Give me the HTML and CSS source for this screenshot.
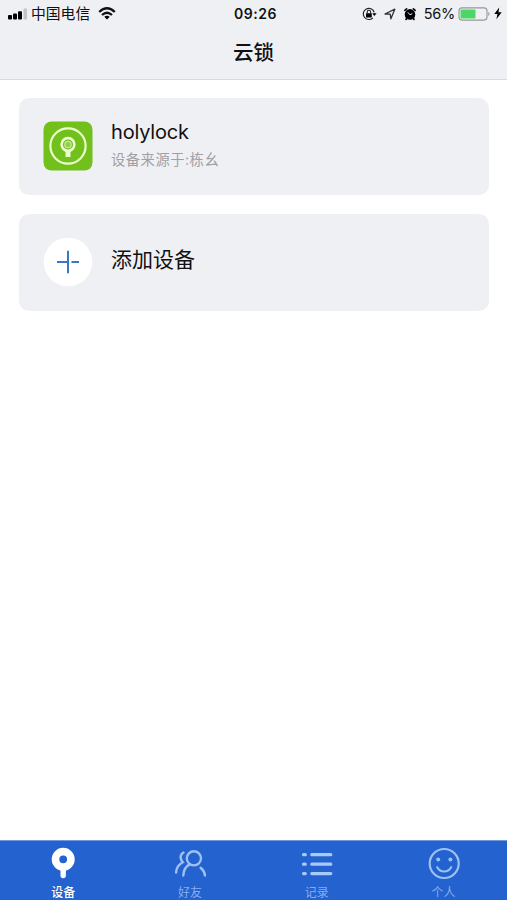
FILE: index.html
```html
<!DOCTYPE html>
<html lang="zh">
<head>
    <meta charset="UTF-8">
    <meta name="viewport" content="width=device-width, initial-scale=1.0">
    <title>云锁</title>
    <link rel="stylesheet" href="styles.css">
</head>
<body>
    <div class="app">
        <header class="header">
            <div class="status-bar">
                <div class="status-left">
                    <svg class="signal" width="20" height="12" viewBox="0 0 20 12">
                        <rect x="0" y="7" width="4" height="4.5" rx="1"/>
                        <rect x="5" y="5.5" width="4" height="6" rx="1"/>
                        <rect x="10" y="3.3" width="4" height="8.2" rx="1"/>
                        <rect x="15.5" y="0.5" width="3.5" height="11" rx="1" fill="#c3c4c9"/>
                    </svg>
                    <span class="carrier">中国电信</span>
                    <svg class="wifi" width="18" height="13" viewBox="0 0 18 13">
                        <path d="M1.2 5Q9-2.4 16.8 5M4 8Q9 3.6 14 8" fill="none" stroke="#111" stroke-width="2.3"/>
                        <path d="M6.3 9.8Q9 7.8 11.7 9.8L9 12.5Z"/>
                    </svg>
                </div>
                <span class="time">09:26</span>
                <div class="status-right">
                    <svg width="15" height="14" viewBox="0 0 15 14">
                        <path d="M12.2 5.2A5.6 5.6 0 1 0 10.9 10.8" fill="none" stroke="#222" stroke-width="1.2"/>
                        <path d="M10.2 6.2h4.4l-2.2 2.9z"/>
                        <rect x="4" y="6.2" width="5.8" height="4.2" rx=".5"/>
                        <path d="M5.2 6.5V5a1.7 1.7 0 0 1 3.4 0v1.5" fill="none" stroke="#222" stroke-width="1.1"/>
                    </svg>
                    <svg class="location" width="12" height="12" viewBox="0 0 12 12">
                        <path d="M1 6L10.8 1.2L6.9 10.8L6.2 6.2Z" fill="none" stroke="#333" stroke-width="1.3" stroke-linejoin="round"/>
                    </svg>
                    <svg class="alarm" width="14" height="14" viewBox="0 0 14 14">
                        <circle cx="7" cy="7.4" r="5.3"/>
                        <path d="M1.9 3.4L3.6 1.9M12.1 3.4L10.4 1.9M3.9 11.2L3 12.4M10.1 11.2l.9 1.2" stroke="#111" stroke-width="1.8" stroke-linecap="round"/>
                        <path d="M4.8 5.3L7 7.8L9.3 6.5" fill="none" stroke="#eff0f4" stroke-width="1"/>
                    </svg>
                    <span class="percent">56%</span>
                    <svg class="battery" width="33" height="14" viewBox="0 0 33 14">
                        <rect x="1" y=".9" width="28" height="12.2" rx="3" fill="none" stroke="#96979b" stroke-width="1.1"/>
                        <rect x="2.5" y="2.4" width="15" height="9.2" rx="1" fill="#4cd765"/>
                        <path d="M30.3 4.8q2.5 2.2 0 4.4z" fill="#96979b"/>
                    </svg>
                    <svg class="bolt" width="8" height="13" viewBox="0 0 8 13">
                        <path d="M5.2.4L.3 7h3.1L2.4 12.2L7.7 5.3H4.5Z"/>
                    </svg>
                </div>
            </div>
            <h1>云锁</h1>
        </header>

        <main class="device-list">
            <div class="card">
                <svg class="card-icon" width="50" height="50" viewBox="0 0 50 50">
                    <rect x=".5" y=".5" width="49" height="49" rx="8" fill="#71c01c"/>
                    <circle cx="25" cy="25" r="17.6" fill="none" stroke="#eaffcd" stroke-width="2.2"/>
                    <path d="M25 28v8" stroke="#eaffcd" stroke-width="5"/>
                    <circle cx="25" cy="23.5" r="6.4" fill="#71c01c" stroke="#eaffcd" stroke-width="2.6"/>
                    <circle cx="25" cy="23.5" r="3.2" fill="#92cd4e" stroke="#c5ea98" stroke-width="1.3"/>
                </svg>
                <div class="card-text">
                    <h2>holylock</h2>
                    <p>设备来源于:栋幺</p>
                </div>
            </div>
            <div class="card">
                <svg class="card-icon" width="50" height="50" viewBox="0 0 50 50">
                    <circle cx="25" cy="25" r="24.3" fill="#fff"/>
                    <path d="M25 13.8v22.4M14 25h11M28.5 25h7.5" stroke="#3878c4" stroke-width="2"/>
                </svg>
                <div class="card-text">
                    <h2 class="add-title">添加设备</h2>
                </div>
            </div>
        </main>

        <nav class="tab-bar">
            <a class="tab active">
                <svg width="34" height="34" viewBox="0 0 34 34">
                    <path d="M17.2 23v6.5" stroke="#fff" stroke-width="5.4" stroke-linecap="round"/>
                    <circle cx="17.2" cy="13.3" r="7.7" fill="none" stroke="#fff" stroke-width="7.6"/>
                </svg>
                <span>设备</span>
            </a>
            <a class="tab">
                <svg width="34" height="34" viewBox="0 0 34 34" fill="none" stroke="#9dc0f5" stroke-width="2.4" stroke-linecap="round">
                    <circle cx="20.9" cy="12.3" r="7.1"/>
                    <path d="M16.6 18.4Q10.6 21.5 10.3 29.5M27.6 21.8Q31.4 24.8 32 29.5M10.5 6.6Q6.8 9 7.8 12.6Q8.3 14.5 9.8 16.2Q3.4 19.5 3.1 26.6"/>
                </svg>
                <span>好友</span>
            </a>
            <a class="tab">
                <svg width="34" height="34" viewBox="0 0 34 34" fill="none" stroke="#a9caf8" stroke-width="3.2" stroke-linecap="round">
                    <path d="M3.5 8.7h1.8M11.8 8.7h19M3.5 18.2h1.8M11.8 18.2h19M3.5 27.6h1.8M11.8 27.6h19"/>
                </svg>
                <span>记录</span>
            </a>
            <a class="tab">
                <svg width="34" height="34" viewBox="0 0 34 34" fill="none" stroke="#9dc0f5" stroke-width="2.2" stroke-linecap="round">
                    <circle cx="17.2" cy="17.5" r="14.5"/>
                    <path d="M10.2 21.2Q12.7 25.5 17.2 25.5T24.2 21.2"/>
                    <circle cx="11.2" cy="13.6" r="2" fill="#9dc0f5" stroke="none"/>
                    <circle cx="23.4" cy="13.6" r="2" fill="#9dc0f5" stroke="none"/>
                </svg>
                <span>个人</span>
            </a>
        </nav>
    </div>
</body>
</html>
```
FILE: styles.css
```css
* {
    box-sizing: border-box;
}

body {
    margin: 0;
    font-family: Inter, "Noto Sans CJK SC", sans-serif;
    color: #111;
    background: #fff;
}

h1, h2, p {
    margin: 0;
    font-weight: normal;
}

svg {
    display: block;
    flex-shrink: 0;
}

.app {
    height: 100vh;
    display: flex;
    flex-direction: column;
}

.header {
    height: 80px;
    background: #eff0f4;
    border-bottom: 1px solid #d9dadd;
}

.status-bar {
    height: 27px;
    padding: 0 5px 0 8px;
    display: grid;
    grid-template-columns: 1fr auto 1fr;
    align-items: center;
}

.status-left,
.status-right {
    display: flex;
    align-items: center;
}

.status-right {
    justify-content: flex-end;
}

.carrier {
    margin-left: 3px;
    padding-top: 2px;
    font-size: 14.8px;
    line-height: 25px;
}

.wifi {
    margin-left: 8px;
}

.time {
    padding-left: 1px;
    font-size: 14px;
    font-weight: 600;
    letter-spacing: 0.5px;
}

.location {
    margin-left: 7px;
}

.alarm {
    margin-left: 7px;
}

.percent {
    margin-left: 7px;
    font-size: 14.5px;
    letter-spacing: -0.3px;
}

.battery {
    margin-left: 3px;
}

.bolt {
    margin-left: 3px;
}

h1 {
    padding-top: 1px;
    font-size: 20.5px;
    font-weight: 500;
    line-height: 50px;
    text-align: center;
}

.device-list {
    flex: 1;
    padding: 18px 18px 0 19px;
    display: flex;
    flex-direction: column;
    gap: 19px;
}

.card {
    height: 97px;
    padding: 0 24px 1px;
    display: flex;
    align-items: center;
    background: #eff0f4;
    border-radius: 10px;
}

.card-text {
    margin-left: 18px;
}

.card h2 {
    font-size: 20px;
    line-height: 27px;
    letter-spacing: -0.2px;
}

.card p {
    font-size: 14.3px;
    line-height: 27px;
    letter-spacing: 0.5px;
    color: #a0a1a5;
}

.card .add-title {
    font-size: 21px;
    letter-spacing: 0;
    padding-bottom: 6px;
}

.tab-bar {
    height: 60px;
    display: flex;
    background: #2362cf;
    border-top: 1px solid #6f9ade;
}

.tab {
    flex: 1;
    padding-top: 5px;
    display: flex;
    flex-direction: column;
    align-items: center;
    font-size: 12px;
    line-height: 25px;
    color: #87aeee;
}

.tab.active {
    color: #fff;
    font-weight: 500;
}
```
